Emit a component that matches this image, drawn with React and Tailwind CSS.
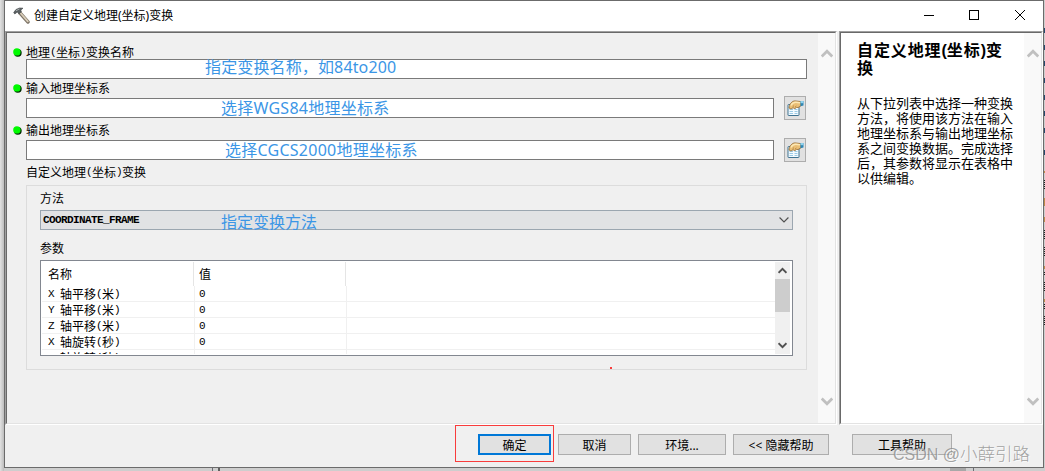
import clsx from 'clsx';

const PARAMS = [
  { name: 'X 轴平移(米)', value: '0' },
  { name: 'Y 轴平移(米)', value: '0' },
  { name: 'Z 轴平移(米)', value: '0' },
  { name: 'X 轴旋转(秒)', value: '0' },
  { name: 'Y 轴旋转(秒)', value: '0' },
];

const HELP_LINES = [
  '从下拉列表中选择一种变换',
  '方法，将使用该方法在输入',
  '地理坐标系与输出地理坐标',
  '系之间变换数据。完成选择',
  '后，其参数将显示在表格中',
  '以供编辑。',
];

// Chinese runs are full width, latin runs take exactly half of that
function Text({ children }) {
  const runs = children.match(/[\x20-\x7e]+|[^\x20-\x7e]+/g) || [];
  return (
    <span className="flex h-4 items-center whitespace-pre">
      {runs.map((run, i) =>
        /^[\x20-\x7e]/.test(run) ? (
          <span key={i} className="font-['Liberation_Mono',monospace] text-[11px] tracking-[-0.6px]">{run}</span>
        ) : (
          <span key={i}>{run}</span>
        )
      )}
    </span>
  );
}

function Chevron({ up, className, width = 2 }) {
  return (
    <svg viewBox="0 0 12 9" className={className} fill="none" stroke="currentColor" strokeWidth={width}>
      <path d={up ? 'M0.7 7.5 6 2.3 11.3 7.5' : 'M0.7 1.5 6 6.7 11.3 1.5'} />
    </svg>
  );
}

function Hammer() {
  return (
    <svg viewBox="0 0 17 17" className="h-[17px] w-[17px]">
      <path d="M7 6 15 15" stroke="#7c7265" strokeWidth="3.4" strokeLinecap="round" />
      <path d="M7 5.5 14.8 14.4" stroke="#d8cdb9" strokeWidth="1.8" strokeLinecap="round" />
      <path d="M0.7 5.5 3 2.5 6.5 1 10 1.2 7.8 3 8.3 5 5.8 6.8 4.3 5 1.8 7Z" fill="#5b6163" stroke="#3d4243" strokeWidth=".6" />
      <path d="M3 3.7 6.5 2" stroke="#b9c0c2" strokeWidth=".8" />
    </svg>
  );
}

// Hand pointing over a property sheet
function BrowseIcon() {
  return (
    <svg viewBox="0 0 17 17" className="h-[17px] w-[17px] shrink-0">
      <rect x="1" y="4.5" width="11" height="11" rx=".5" fill="#f4fbff" stroke="#3f7391" />
      <path d="M2.5 9.5h3.5M7.5 9.5h3M2.5 11.5h3.5M7.5 11.5h3M2.5 13.5h3.5M7.5 13.5h3" stroke="#9bcbe6" />
      <path d="M2 8C2.5 4 5 .9 8 .9L14 1.6v4.2L11 7.6 9.5 7.4 8 8.6 6 7.8 4 9Z" fill="#eabf76" stroke="#94682d" strokeWidth=".8" />
      <path d="M3.8 5.5C5 3.3 7 2.1 9 2.2L13 2.8" stroke="#fde8b4" strokeWidth="1.5" fill="none" />
      <path d="M5.5 7 7 5.6M8 7.2 9.3 6" stroke="#a5732f" strokeWidth=".7" />
      <path d="M13.5 1h3v4.6l-3 .7Z" fill="#2f86b3" />
      <path d="M13.5 1h3v2.2h-3Z" fill="#8fd2ee" />
    </svg>
  );
}

function FieldLabel({ children }) {
  return (
    <div className="flex h-[15px] items-center pl-[7px]">
      <svg viewBox="0 0 9 9" className="relative top-px mr-1 h-[9px] w-[9px] shrink-0">
        <circle cx="4.8" cy="4.8" r="3.9" fill="#002800" />
        <circle cx="3.9" cy="3.9" r="3.7" fill="#00fa00" />
      </svg>
      <Text>{children}</Text>
    </div>
  );
}

function Note({ children, className }) {
  return (
    <span className={clsx("absolute whitespace-nowrap font-['Noto_Sans','Noto_Sans_CJK_SC',sans-serif] text-base leading-5 text-[#3b96e6]", className)}>
      {children}
    </span>
  );
}

function Field({ note, noteClass, browse }) {
  return (
    <div className="flex h-5 items-center pl-5">
      <div className={clsx('relative h-5 border border-[#7a7a7a] bg-white', browse ? 'w-[748px]' : 'w-[781px]')}>
        <Note className={noteClass}>{note}</Note>
      </div>
      {browse && (
        <button className="ml-2.5 flex h-6 w-[22px] shrink-0 items-center justify-center border border-[#adadad] bg-[#e1e1e1]">
          <BrowseIcon />
        </button>
      )}
    </div>
  );
}

function DisabledScrollbar() {
  return (
    <div className="flex w-[17px] shrink-0 flex-col items-center justify-between bg-[#f9f9f9] pt-4 pb-[17px] text-[#c0c0c0]">
      <Chevron up width={2.8} className="h-[9px] w-3" />
      <Chevron width={2.8} className="h-[9px] w-3" />
    </div>
  );
}

function Button({ children, className }) {
  return (
    <button className={clsx("flex h-[21px] items-center justify-center border bg-[#e1e1e1] pt-0.5 font-['Noto_Sans','Noto_Sans_CJK_SC',sans-serif] leading-4 whitespace-pre", className)}>
      {children}
    </button>
  );
}

function TitleBar() {
  return (
    <div className="flex h-[30px] shrink-0 items-center bg-white">
      <div className="-mt-0.5 ml-2"><Hammer /></div>
      <span className="ml-1 font-['Noto_Sans','Noto_Sans_CJK_SC',sans-serif]">创建自定义地理(坐标)变换</span>
      <svg viewBox="0 0 102 12" className="mr-[17px] mb-0.5 ml-auto h-3 w-[102px]" fill="none" stroke="#000" shapeRendering="crispEdges">
        <path d="M0 6.5h10" />
        <rect x="45.5" y="1.5" width="9" height="9" />
        <path d="M91 1 101 11M101 1 91 11" shapeRendering="auto" />
      </svg>
    </div>
  );
}

function ParamTable() {
  return (
    <div className="flex h-[96px] w-[753px] border border-[#828790] bg-white p-px">
      <div className="min-w-0 flex-1 overflow-hidden">
        <div className="flex h-6 items-center">
          <div className="flex h-full w-[152px] items-center border-r border-[#e5e5e5] pl-1.5">名称</div>
          <div className="flex h-full w-[152px] items-center border-r border-[#e5e5e5] pl-[5px]">值</div>
        </div>
        {PARAMS.map((p, i) => (
          <div key={i} className="flex h-4 items-center border-b border-[#f0f0f0]">
            <div className="flex h-full w-[153px] items-center border-r border-[#f0f0f0] pt-px pl-1.5"><Text>{p.name}</Text></div>
            <div className="flex h-full w-[152px] items-center border-r border-[#f0f0f0] pt-px pl-1"><Text>{p.value}</Text></div>
          </div>
        ))}
      </div>
      <div className="mr-px flex w-[15px] flex-col items-center bg-[#f0f0f0] text-[#505050]">
        <div className="flex h-[17px] shrink-0 items-center"><Chevron up width={2.6} className="h-[7px] w-[9px]" /></div>
        <div className="h-[33px] w-full bg-[#cdcdcd]" />
        <div className="mt-auto flex h-[17px] items-center"><Chevron width={2.6} className="h-[7px] w-[9px]" /></div>
      </div>
    </div>
  );
}

// Slivers of the window behind the dialog
function Backdrop() {
  return (
    <svg viewBox="0 0 1045 471" className="absolute inset-0 h-[471px] w-[1045px]" shapeRendering="crispEdges">
      <defs>
        <linearGradient id="edge">
          <stop offset="0" stopColor="#e2e2e2" />
          <stop offset="1" stopColor="#bdbdbd" />
        </linearGradient>
      </defs>
      <rect width="1045" height="471" fill="#cecece" />
      <rect width="4" height="471" fill="url(#edge)" />
      <path d="M212.5 468v3M973.5 468v3" stroke="#6c6c74" />
      <path d="M219 468v3" stroke="#606060" strokeWidth="2" />
      <path d="M950 469.5h16" stroke="#a8a8a8" strokeWidth="3" />
      <path d="M1044.5 28v5M1044.5 45v5M1044.5 61v5M1044.5 78v5M1044.5 95v5M1044.5 111v5M1044.5 128v5M1044.5 150v5" stroke="#24486c" />
      <path d="M1044.5 171v2M1044.5 198v8M1044.5 217v5M1044.5 266v3M1044.5 299v3" stroke="#c08a4a" />
      <path d="M1044.5 180v9M1044.5 230v9M1044.5 247v10M1044.5 272v3M1044.5 282v9M1044.5 304v6M1044.5 316v9" stroke="#202020" strokeDasharray="1 1" />
    </svg>
  );
}

export default function App() {
  return (
    <div className="relative h-[471px] w-[1045px] overflow-hidden pl-1 font-['Noto_Sans_CJK_SC',sans-serif] text-xs leading-4 text-black">
      <Backdrop />
      <div className="relative flex h-[468px] w-[1040px] flex-col border border-[#6b6b6b] bg-[#f0f0f0]">
        <TitleBar />

        <div className="flex h-[394px] shrink-0">
          {/* Tool parameters */}
          <div className="w-[832px] border border-t-[#a0a0a0] border-r-white border-b-white border-l-[#a0a0a0]">
            <div className="flex h-full border border-t-[#696969] border-r-[#e3e3e3] border-b-[#e3e3e3] border-l-[#696969]">
              <div className="-ml-px flex-1 pt-[11px]">
                <FieldLabel>地理(坐标)变换名称</FieldLabel>
                <Field note="指定变换名称，如84to200" noteClass="-top-[3px] left-[178px] tracking-[0.14px]" />
                <div className="mt-px mb-[3px]"><FieldLabel>输入地理坐标系</FieldLabel></div>
                <Field browse note="选择WGS84地理坐标系" noteClass="-top-px left-[194px] tracking-[0.25px]" />
                <div className="mt-1 mb-[3px]"><FieldLabel>输出地理坐标系</FieldLabel></div>
                <Field browse note="选择CGCS2000地理坐标系" noteClass="-top-px left-[198px] tracking-[0.25px]" />
                <div className="mt-1 pl-5"><Text>自定义地理(坐标)变换</Text></div>

                <div className="mt-[5px] ml-5 h-[185px] w-[781px] border border-[#dcdcdc] pt-1 pl-[13px]">
                  <div>方法</div>
                  <div className="relative mt-1 flex h-5 w-[753px] items-center border border-[#9ba6b0] bg-[#e1e2e4] pl-0.5">
                    <span className="font-['Liberation_Mono',monospace] text-[11px] font-bold tracking-[-0.6px]">COORDINATE_FRAME</span>
                    <Chevron width={1.4} className="mr-[3px] ml-auto h-2 w-2.5 text-[#505050]" />
                    <Note className="top-px left-[180px]">指定变换方法</Note>
                  </div>
                  <div className="mt-2.5 mb-1">参数</div>
                  <ParamTable />
                </div>
              </div>
              <DisabledScrollbar />
            </div>
          </div>

          {/* Help */}
          <div className="ml-0.5 w-[204px] border border-t-[#a0a0a0] border-r-white border-b-white border-l-[#a0a0a0]">
            <div className="flex h-full border border-t-[#696969] border-r-[#e3e3e3] border-b-[#e3e3e3] border-l-[#696969] bg-white">
              <div className="flex-1 pt-[9px] pl-4">
                <h1 className="font-['Liberation_Sans','Noto_Sans_CJK_SC',sans-serif] text-base leading-[18px] font-bold whitespace-nowrap">
                  <span className="tracking-[0.9px]">自定义地理</span>(<span className="tracking-[0.9px]">坐标</span>)变<br />换
                </h1>
                <p className="mt-[17px] text-[13px] leading-[15px] whitespace-nowrap">
                  {HELP_LINES.map((line) => (
                    <span key={line} className="block">{line}</span>
                  ))}
                </p>
              </div>
              <DisabledScrollbar />
            </div>
          </div>
        </div>

        <div className="flex pt-[9px] pl-[473px]">
          <div className="relative">
            <Button className="w-[73px] border-2 border-[#0078d7]">确定</Button>
            <div className="absolute -top-[9px] -left-[23px] h-[37px] w-[99px] border border-[#f83c3c]" />
          </div>
          <Button className="ml-[7px] w-[73px] border-[#adadad]">取消</Button>
          <Button className="ml-[7px] w-[88px] border-[#adadad]">环境...</Button>
          <Button className="ml-[7px] w-[96px] border-[#adadad]">{'<< 隐藏帮助'}</Button>
          <Button className="ml-[23px] w-[100px] border-[#adadad]">工具帮助</Button>
        </div>
      </div>

      {/* Stray pen mark */}
      <div className="absolute top-[367px] left-[610px] h-0.5 w-0.5 bg-[#f83c3c]" />

      <div className="absolute top-[442px] left-[893px] font-['Liberation_Sans','Noto_Sans_CJK_SC',sans-serif] text-[17px] leading-6 whitespace-nowrap text-[#8c8c8c]/80 [text-shadow:1px_1px_0_#ffffffb0]">
        <span className="text-base">CSDN </span>@<span className="text-[17.5px] font-light">小薛引路</span>
      </div>
    </div>
  );
}
